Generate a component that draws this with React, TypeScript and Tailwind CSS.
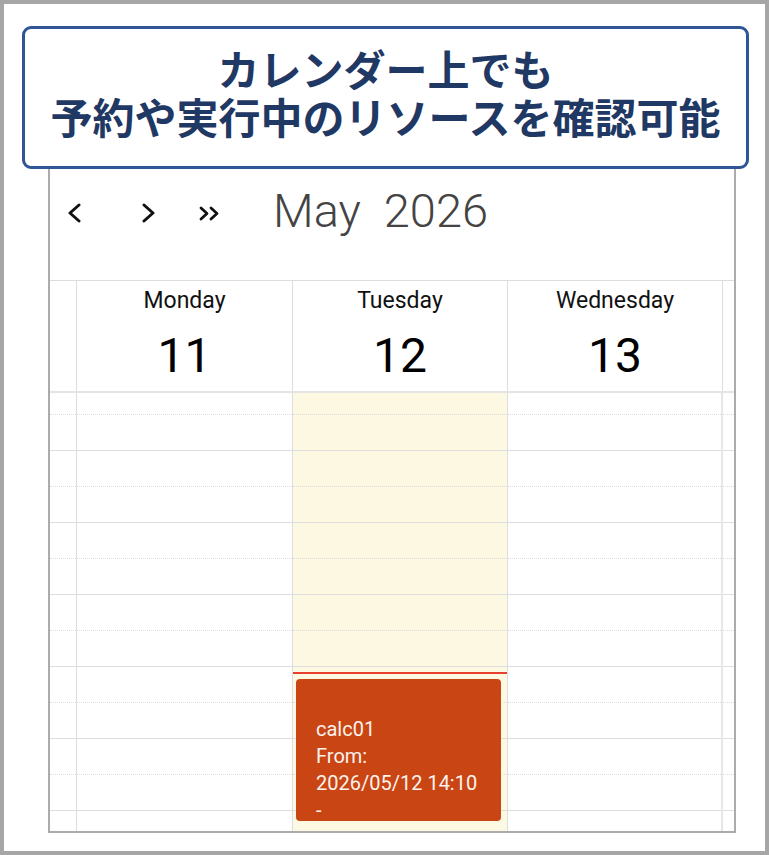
import React from 'react';

const slots = Array.from({ length: 13 }, (_, i) => i);

// one column of half-hour slots; even slots end on a dotted line, odd ones on the hour line
const SlotColumn: React.FC<{ className?: string; children?: React.ReactNode }> = ({ className = '', children }) => (
  <div className={`relative overflow-hidden ${className}`}>
    <div className="-mt-[14px]">
      {slots.map((i) => (
        <div
          key={i}
          className={`h-[36px] border-b ${i % 2 === 0 ? 'border-dotted border-[#dcdcdc]' : 'border-solid border-[#dddddd]'}`}
        />
      ))}
    </div>
    {children}
  </div>
);

const ChevronLeft = () => (
  <svg width="14" height="20" viewBox="0 0 14 20" fill="none" stroke="#111" strokeWidth="3" strokeLinecap="round" strokeLinejoin="round">
    <polyline points="12,2 3,10 12,18" />
  </svg>
);

const ChevronRight = () => (
  <svg width="14" height="20" viewBox="0 0 14 20" fill="none" stroke="#111" strokeWidth="3" strokeLinecap="round" strokeLinejoin="round">
    <polyline points="2,2 11,10 2,18" />
  </svg>
);

const DoubleRight = () => (
  <svg width="22" height="15" viewBox="0 0 22 15" fill="none" stroke="#111" strokeWidth="2.8" strokeLinecap="round" strokeLinejoin="round">
    <polyline points="2,2 8,7.5 2,13" />
    <polyline points="12,2 18,7.5 12,13" />
  </svg>
);

const days = [
  { name: 'Monday', date: '11', w: 'w-[216px]' },
  { name: 'Tuesday', date: '12', w: 'w-[215px]' },
  { name: 'Wednesday', date: '13', w: 'w-[215px]' },
];

export default function App() {
  return (
    <div className="relative w-[769px] h-[855px] border-4 border-[#a6a6a6] bg-white overflow-hidden">
      {/* Week view */}
      <div
        className="ml-[44px] mt-[146px] w-[688px] h-[683px] border-2 border-[#ababab] flex flex-col"
        style={{ fontFamily: 'Roboto, "Liberation Sans", sans-serif' }}
      >
        {/* toolbar */}
        <div className="h-[129px] border-b border-[#dddddd] flex items-center pl-[17px] pb-[6px] shrink-0">
          <ChevronLeft />
          <div className="ml-[61px]">
            <ChevronRight />
          </div>
          <div className="ml-[43px] mt-[1px]">
            <DoubleRight />
          </div>
          <div className="ml-[52px] -mt-[5px] text-[47px] leading-none font-light text-[#444444] whitespace-pre">
            May  2026
          </div>
        </div>

        {/* day headers */}
        <div className="h-[112px] border-b-2 border-[#e4e4e4] flex shrink-0">
          <div className="w-[27px] border-r border-[#dddddd]" />
          {days.map((d) => (
            <div key={d.name} className={`${d.w} border-r border-[#dddddd] flex flex-col items-center pt-[8px]`}>
              <div className="text-[23px] leading-none text-[#111111]">{d.name}</div>
              <div className="mt-[20px] text-[48px] leading-none text-black">{d.date}</div>
            </div>
          ))}
          <div className="flex-1" />
        </div>

        {/* time grid */}
        <div className="flex-1 flex min-h-0">
          <SlotColumn className="w-[27px] border-r border-[#dddddd]" />
          <SlotColumn className="w-[216px] border-r border-[#dddddd]" />
          <SlotColumn className="w-[215px] border-r border-[#dddddd] bg-[#fdf8e1]">
            {/* now indicator */}
            <div className="absolute left-0 right-0 top-[279px] h-[2px] bg-[#e8402f]" />
            <div className="absolute left-[3px] w-[205px] top-[286px] h-[142px] rounded-[4px] bg-[#c94513] text-[#fdf3ee] text-[20px] leading-[27px] pl-[20px] pt-[37px]">
              <div>calc01</div>
              <div>From:</div>
              <div>2026/05/12 14:10</div>
              <div>-</div>
            </div>
          </SlotColumn>
          <SlotColumn className="w-[215px] border-r-2 border-[#e6e6e6]" />
          <SlotColumn className="flex-1" />
        </div>
      </div>

      {/* caption */}
      <div
        className="absolute left-[18px] top-[22px] w-[727px] h-[143px] z-10 bg-white border-[3px] border-[#2f5597] rounded-[9px] flex items-center justify-center pb-[12px] text-[#1f3864] text-[42px] leading-[48px] font-bold text-center"
        style={{ fontFamily: '"Noto Sans CJK JP", "Noto Sans", sans-serif' }}
      >
        <p>
          カレンダー上でも
          <br />
          予約や実行中のリソースを確認可能
        </p>
      </div>
    </div>
  );
}
